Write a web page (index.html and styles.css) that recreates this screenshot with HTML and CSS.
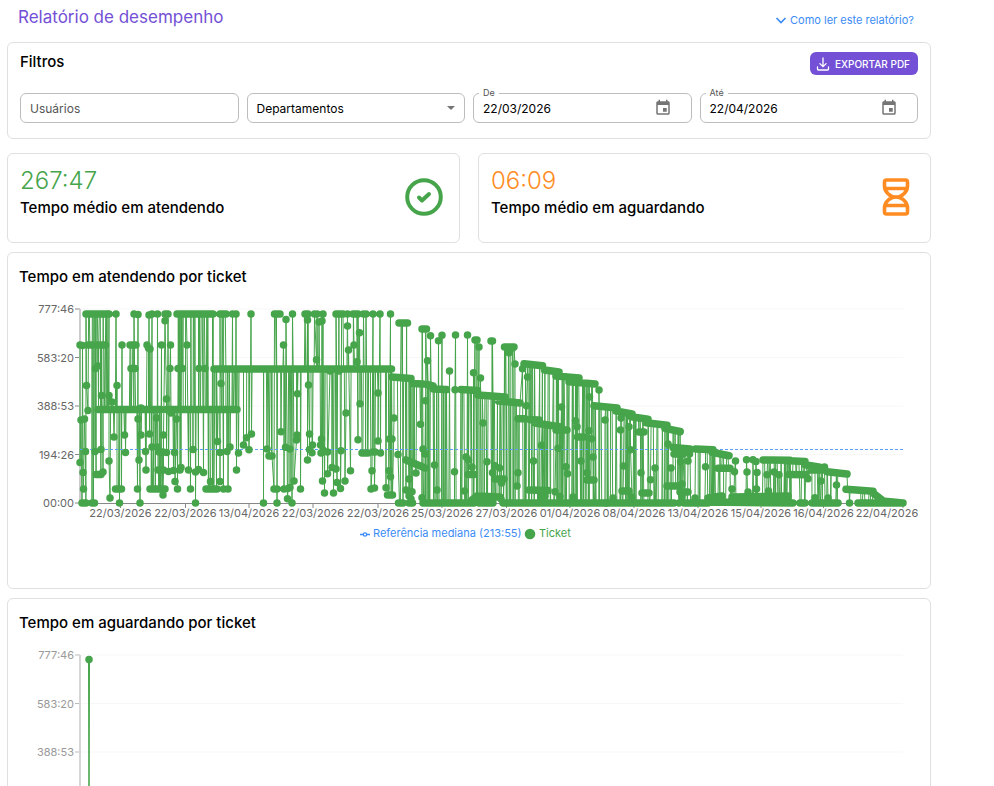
FILE: index.html
```html
<!DOCTYPE html>
<html lang="pt-BR">
<head>
<meta charset="utf-8">
<meta name="viewport" content="width=device-width, initial-scale=1">
<title>Relatório de desempenho</title>
<link rel="stylesheet" href="styles.css">
</head>
<body>
<main class="page">
  <header class="page-head">
    <h1 class="page-title">Relatório de desempenho</h1>
    <a class="help-link" href="#ajuda">
      <svg class="help-icon" viewBox="0 0 12 12" aria-hidden="true"><path d="M1.500 4 6 8.500 10.500 4" fill="none" stroke="currentColor" stroke-width="1.700"/></svg>
      Como ler este relatório?
    </a>
  </header>

  <section class="card filters">
    <div class="filters-head">
      <h2 class="card-title">Filtros</h2>
      <button class="export" type="button">
        <svg class="export-icon" viewBox="0 0 14 14" aria-hidden="true"><path d="M7 1v8.600M3.900 6.600 7 9.700l3.100-3.100M1.500 9.800v2.400q0 .8.8.8h9.400q.8 0 .8-.8V9.800" fill="none" stroke="currentColor" stroke-width="1.300" stroke-linecap="round"/></svg>
        EXPORTAR PDF
      </button>
    </div>
    <form class="fields">
      <div class="field">
        <input class="control" type="text" placeholder="Usuários" aria-label="Usuários">
      </div>
      <div class="field">
        <select class="control select" aria-label="Departamentos"><option>Departamentos</option></select>
        <svg class="caret" viewBox="0 0 8 4" aria-hidden="true"><path d="M0 0h8L4 4z" fill="#757575"/></svg>
      </div>
      <div class="field">
        <label class="field-label" for="de">De</label>
        <input class="control" id="de" type="text" value="22/03/2026">
        <button class="calendar" type="button" aria-label="Escolher data inicial"><svg viewBox="0 0 24 24" aria-hidden="true"><path d="M17 12h-5v5h5v-5zM16 1v2H8V1H6v2H5c-1.110 0-1.990.9-1.990 2L3 19c0 1.100.89 2 2 2h14c1.100 0 2-.9 2-2V5c0-1.100-.9-2-2-2h-1V1h-2zm3 18H5V8h14v11z" fill="#757575"/></svg></button>
      </div>
      <div class="field">
        <label class="field-label" for="ate">Até</label>
        <input class="control" id="ate" type="text" value="22/04/2026">
        <button class="calendar" type="button" aria-label="Escolher data final"><svg viewBox="0 0 24 24" aria-hidden="true"><path d="M17 12h-5v5h5v-5zM16 1v2H8V1H6v2H5c-1.110 0-1.990.9-1.990 2L3 19c0 1.100.89 2 2 2h14c1.100 0 2-.9 2-2V5c0-1.100-.9-2-2-2h-1V1h-2zm3 18H5V8h14v11z" fill="#757575"/></svg></button>
      </div>
    </form>
  </section>

  <section class="stats">
    <article class="card stat">
      <div>
        <p class="stat-value green">267:47</p>
        <h2 class="card-title">Tempo médio em atendendo</h2>
      </div>
      <svg class="stat-icon green" viewBox="0 0 38 38" aria-hidden="true"><circle cx="19" cy="19" r="16.800" fill="none" stroke="currentColor" stroke-width="4"/><path d="M14 19.500 17 22.500l7-6.500" fill="none" stroke="currentColor" stroke-width="4" stroke-linecap="round" stroke-linejoin="round"/></svg>
    </article>
    <article class="card stat">
      <div>
        <p class="stat-value orange">06:09</p>
        <h2 class="card-title">Tempo médio em aguardando</h2>
      </div>
      <svg class="stat-icon narrow orange" viewBox="0 0 28 38" aria-hidden="true"><g fill="none" stroke="currentColor" stroke-width="3.600" stroke-linejoin="round"><path d="M4.500 2h19q2 0 2 2v4C25.500 14 20 19 14 19S2.500 14 2.500 8V4q0-2 2-2zM4.500 36h19q2 0 2-2v-4C25.500 24 20 19 14 19S2.500 24 2.500 30v4q0 2 2 2zM3 10.500h22M3 27.500h22"/></g></svg>
    </article>
  </section>

  <section class="card chart-card">
    <h2 class="card-title">Tempo em atendendo por ticket</h2>
    <svg class="chart" id="chart-atendendo" viewBox="19 296 900 250" role="img" aria-label="Tempo em atendendo por ticket"></svg>
  </section>

  <section class="card chart-card">
    <h2 class="card-title">Tempo em aguardando por ticket</h2>
    <svg class="chart muted" id="chart-aguardando" viewBox="19 296 900 250" role="img" aria-label="Tempo em aguardando por ticket"></svg>
  </section>
</main>
<script src="charts.js"></script>
</body>
</html>
```
FILE: styles.css
```css
* { box-sizing: border-box; }

body {
  margin: 0;
  background: #fff;
  color: #000;
  font-family: Inter, "Liberation Sans", sans-serif;
  font-size: 12px;
}

h1, h2, p { margin: 0; }

button, input, select { font: inherit; color: inherit; }

.page {
  display: flex;
  flex-direction: column;
  margin: 0 63px 0 7px;
}

.page-head {
  display: flex;
  justify-content: space-between;
  align-items: center;
  height: 34px;
  margin-bottom: 8px;
  padding: 0 17px 0 11px;
}

.page-title {
  color: #7350d6;
  font-size: 17px;
  font-weight: 400;
  line-height: 24px;
}

.help-link {
  display: flex;
  align-items: center;
  gap: 3px;
  padding-top: 6px;
  color: #3b8cf5;
  font-size: 11px;
  line-height: 16px;
  text-decoration: none;
}

.help-icon { width: 12px; height: 12px; }

.card {
  border: 1px solid #e0e0e0;
  border-radius: 6px;
  background: #fff;
}

.card-title {
  font-size: 15px;
  font-weight: 500;
  line-height: 20px;
}

.filters { padding: 9px 12px 15px; }

.filters-head {
  display: flex;
  justify-content: space-between;
  align-items: flex-start;
  margin-bottom: 18px;
}

.export {
  display: flex;
  align-items: center;
  gap: 5px;
  height: 23px;
  padding: 0 8px 0 6px;
  border: 0;
  border-radius: 6px;
  background: #7350d6;
  color: #fff;
  font-size: 10px;
  font-weight: 500;
}

.export-icon { width: 14px; height: 14px; }

.fields {
  display: grid;
  grid-template-columns: repeat(4, 1fr);
  gap: 8px;
}

.field { position: relative; }

.control {
  display: block;
  width: 100%;
  height: 30px;
  padding: 0 9px;
  border: 1px solid #bdbdbd;
  border-radius: 6px;
  background: #fff;
  outline: 0;
}

.control::placeholder { color: #555; opacity: 1; }

.select { appearance: none; }

.caret {
  position: absolute;
  top: 13px;
  right: 10px;
  width: 8px;
  height: 4px;
  pointer-events: none;
}

.field-label {
  position: absolute;
  top: -6px;
  left: 6px;
  padding: 0 4px;
  background: #fff;
  color: #555;
  font-size: 9px;
  line-height: 12px;
}

.calendar {
  position: absolute;
  top: 6px;
  right: 20px;
  width: 18px;
  height: 18px;
  padding: 0;
  border: 0;
  background: none;
}

.calendar svg { display: block; width: 18px; height: 18px; }

.stats {
  display: grid;
  grid-template-columns: 1fr 1fr;
  gap: 18px;
  margin-top: 14px;
}

.stat {
  display: flex;
  justify-content: space-between;
  align-items: center;
  padding: 10px 16px 24px 12px;
}

.stat-value {
  font-size: 24px;
  font-weight: 300;
  line-height: 34px;
}

.stat-icon { width: 38px; height: 38px; margin-top: 12px; }
.stat-icon.narrow { width: 28px; margin-right: 4px; }

.green { color: #46a44b; }
.orange { color: #ff8c22; }

.chart-card {
  margin-top: 9px;
  padding: 14px 11px 42px;
}

.chart {
  display: block;
  width: 100%;
  height: auto;
  margin-top: 9px;
  overflow: visible;
}

.chart text { font-size: 11px; fill: #666; }
.chart .legend-median { fill: #3b8cf5; }
.chart .legend-ticket { fill: #46a44b; }
.chart.muted text { fill: #999; }

.grid { stroke: #f7f7f7; }
.axis { stroke: #888; }
.axis-y { stroke: #ccc; stroke-width: 2; }
.muted .axis { stroke: #bbb; }
.muted .axis-y { stroke: #d6d6d6; }
.median { stroke: #5c9ffa; stroke-dasharray: 3 2; }
.trace { fill: none; stroke: #46a44b; stroke-width: 1; }
.dots { fill: none; stroke: #46a44b; stroke-width: 7.5; stroke-linecap: round; }
```
FILE: charts.js
```js
const NS = "http://www.w3.org/2000/svg";
const LEFT = 80, RIGHT = 903, TOP = 309, BOTTOM = 503;

// Runs of neighbouring tickets: [x start, y start, x end, y end, sampling step]
const runs = [
  [86,314,107,314,2], [165,314,168,314,3], [177,314,213,314,2.5], [220,314,226,314,3],
  [274.5,314,280,314,3], [305,314,308,314,2], [336,314,343,314,3], [353,314,358,314,2],
  [88,345,92,345,2], [97.500,345,105.500,345,3], [130,345,136,345,3],
  [131,368.5,135,368.5,2], [178,368.5,182.5,368.5,2], [214,369,391.500,369,2.500],
  [98,409.5,161,409.5,1.700], [166,409.5,237,409.5,1.700],
  [159,452,163,452,2], [96,474.5,101,474.5,3], [158,470,163.5,470,3],
  [150,489,165,489,3], [206,489,217,489,3], [115.5,489,121.5,489,6],
  [82,503,86,503,4], [92,503,94.5,503,2], [269,456,272,456,1.500],
  [362,453,368,453,3], [387.5,495,392.5,495,2.5],
  [392,377,411,378.500,2.500], [413,383.500,423,384,3], [427,384.500,433,386,3],
  [433,389,446.5,389.5,4], [461,389.500,477.500,390.500,3], [478,395,505,397,3],
  [498.500,401,520,403,3], [399,323,407.500,323,4], [422,329,426.500,329,4],
  [504.500,347,514,347,3], [475,340,477,340,2], [491,341,492.500,341,1.500],
  [524,363.700,542.500,365.700,3], [544.500,370,559,372,3], [556,376,579,378,3],
  [569,381.700,595,384,3], [594,405.700,617,408,3], [616,411,632,414,3],
  [631,416.700,648,419.300,3], [646,422.700,667,425.300,3], [665,428.300,680,431.500,3],
  [518,418.700,525,418.700,3], [530,419.700,539,420,4], [535,423,561,427,3], [556,430,567,430,4],
  [577.500,437,584,437,3], [406,460,425,468,4], [468,474.500,474,474.500,3],
  [495,479,504,479,4], [587,480,594,480,4], [398.500,503,403,503,2], [409,503,412.500,503,2],
  [423,503,474,503,2.300], [472,500,477,496,2], [477,496,500,497,3], [479,503,493,503,3],
  [503,503,604,503,2.300], [529,490,548,490.500,4], [604,503,674,503,2.600],
  [639,432,644,432,3], [673,447.500,690,449,3], [674,454,683,454,4], [622,491,629,491,4],
  [642,493,649,493,4], [667,486,680,486,4], [680,492,688,492,4],
  [695.500,449,713,449.700,3], [712,452.300,729,455.700,3], [718,468.300,730,468.300,4],
  [684,503,708,503,3], [708,502,793,503,3], [708,498,722,496,4], [732,497,788,496,3.500],
  [763,460,768,460,3], [770,460,790,460.200,4], [784,460.500,805,461.500,3],
  [805,464.700,820,467.300,3], [811,470,825,470,4], [789,474.500,806,474.700,4],
  [827,471.700,847,474,4], [800,503,805,503,2], [812,503,838,503,4],
  [846,489.300,873,491.300,4], [858,503,865,503,4], [866,503,903,503,4], [882,501,903,503,4],
  [873,493,882,500,3]
];

// Single tickets: [x, y]
const points = [
  [109,314],[116,314],[134,314],[138,314.500],[149,315],[152,314],[157.500,314],[232.500,314],[236,314],
  [251,314],[292.500,314],[314.500,314],[317,314],[323,314],[347.500,314],[363.500,314],[366,314],[373,314],[380,314],[390.500,314],
  [165,320.700],[286,319.500],[307.500,320],[319,322],[322,321],[347.500,326],[359.500,332.700],
  [80,345],[82.500,345.500],[122,345],[147,345],[148.500,348],[150,349],[161.500,345],[170.500,345],[187,345],[283.500,345],[354,345],
  [316.500,359.700],[348.500,350],[357,361.700],[95.500,368.500],[98,366],[170,368.500],[199,368.500],[205,368.500],[330,371],[339,371],
  [86.500,385.500],[117,385.500],[221,383.500],[308.500,385],[297.500,393.700],[360,403.700],[378,393],[346,413],[394,418],
  [101.500,395.500],[109,395.500],[166.500,399],[112,402],[88,410.500],[81,420],[84.500,419],[138,419],[156.500,418],[171,413],[176.500,419],[141,408],
  [114,437],[124.500,435],[141,435],[149.500,434],[163.500,435],[95,451.500],[85.500,451.500],[101,449.500],[125.500,452.500],[145.500,451.500],
  [152,447],[157,447],[166.500,452.500],[174.500,452.500],[193,449.500],[217.500,441.500],[220,452.500],[227,451.500],[230,447],[238.500,453],
  [80,462.500],[109,461],[139,460],[83,472.500],[103,472],[146,470],[168.500,471.500],[173.500,470.500],[180,470],[181,467.500],[188.500,470],[195.500,472],[198.500,469.500],[203.500,472.500],[236.500,470],
  [83.500,489],[137.500,489],[163,495],[175,481.500],[177.500,489],[190.500,489],[210.500,481.500],[220,481.500],[223.500,489],[228,489],[110,498],
  [119.500,503],[140,503],[195.500,503],[281,431.700],[251.500,434],[246.500,437.700],[243.500,445],[249,449.700],[267,449],
  [285.500,447.300],[290,449],[297,435],[296.500,440],[309.500,434],[312.500,445],[309.500,449.500],[312,452.700],[307.500,460],
  [321.500,439],[320.500,445],[321,453],[323,450],[327.500,452],[341,450.700],[358,439.700],[373,452],[375,452],[378,441],[380.500,453],[389.500,439],[392,439],[398,454.500],
  [327.500,473.700],[332,467.500],[336,469],[337,482.500],[345,481],[350.500,470.700],[340.500,488.500],[333.500,493],[322.500,481],[324.500,493],
  [274,489],[277,489],[284,489],[288,488.500],[290,487.500],[294,481],[300.500,489],[287.500,498.700],[292,503],[263.500,503],[277,503],
  [371,489],[374.500,488],[372,470.700],[386,487.700],[389,470.700],[390.500,476.700],
  [430.500,335.700],[438.500,340.700],[442,335.300],[455.500,335],[467.500,335],[479,347],[509,352.700],[427.500,360.700],[449.500,371],[473.500,372.700],[480.500,378],[512.500,348],[515,364],[522.500,368.700],
  [455,389.700],[599,390],[425.500,400.700],[420.500,424.300],[527.500,377],[526.500,405.700],[561.500,407],[575.500,420.700],[577,426.700],[589.500,397],[589,430.700],[591.500,438.700],[541.500,445.300],[558,448.300],[483,423],
  [423,449],[425,454],[416,473],[409,479],[434.500,465],[454.500,471.700],[466,457],[468.500,460],[472,467],[487,461.700],[495,465.700],[499.500,468],[492.500,472.700],[501.500,483],
  [518,472.700],[517,486],[533.500,461],[566,466.700],[567.500,473.700],[581,461],[593,457],[587,472.700],[406,490],[412,491.700],[409,496],[411,499],[422,497.700],[437,490],[464.500,491],
  [501,499],[541,497],[545,496],[555,491.700],[560,496.500],[573,497],[613,498],[632,497],[605,420],[621,418],[620.500,430],[629,426.700],[630.500,449.700],[623.500,466],
  [641,472.700],[650.500,479.700],[655,468],[668,444],[671,468],[689.500,454],[680.500,461.700],[688,461],[682,484],[682,497],[679,503],
  [735.500,461],[734.500,471.700],[705.500,466.700],[732,489],[746.500,459.700],[753,459.700],[756,461.500],[747,472],[757,472.500],[767,474.700],[774,472],[779,474.700],
  [808,478.700],[824.500,467],[821,481],[836.500,485],[748,492],[756.500,489],[768.500,491],[695,498],[815,497.700],[828,498],[849.500,503],
  [606,503],[680,431.700]
];

const svgEl = (parent, name, attrs, text) => {
  const el = document.createElementNS(NS, name);
  for (const key in attrs) el.setAttribute(key, attrs[key]);
  if (text) el.textContent = text;
  parent.appendChild(el);
  return el;
};

function drawFrame(svg) {
  ["777:46", "583:20", "388:53", "194:26", "00:00"].forEach((label, i) => {
    const y = TOP + i * (BOTTOM - TOP) / 4;
    if (i < 4) svgEl(svg, "line", { class: "grid", x1: LEFT, x2: RIGHT, y1: y, y2: y });
    svgEl(svg, "line", { class: "axis", x1: LEFT - 5, x2: LEFT, y1: y, y2: y });
    svgEl(svg, "text", { x: LEFT - 6, y: y + 4, "text-anchor": "end" }, label);
  });
  svgEl(svg, "line", { class: "axis axis-y", x1: LEFT, x2: LEFT, y1: TOP, y2: BOTTOM });
  svgEl(svg, "line", { class: "axis", x1: LEFT, x2: RIGHT, y1: BOTTOM + .5, y2: BOTTOM + .5 });
  const dates = [
    [120.5, "22/03/2026"], [185.5, "22/03/2026"], [249, "13/04/2026"], [313, "22/03/2026"],
    [378, "22/03/2026"], [442, "25/03/2026"], [506.5, "27/03/2026"], [570, "01/04/2026"],
    [634, "08/04/2026"], [698, "13/04/2026"], [761, "15/04/2026"], [823.5, "16/04/2026"], [887, "22/04/2026"]
  ];
  dates.forEach(([x, label], i) => {
    const tick = i === dates.length - 1 ? RIGHT : x;
    svgEl(svg, "line", { class: "axis", x1: tick, x2: tick, y1: BOTTOM, y2: BOTTOM + 5 });
    svgEl(svg, "text", { x, y: 517, "text-anchor": "middle" }, label);
  });
}

function drawDots(svg, dots) {
  svgEl(svg, "path", { class: "dots", d: dots.map(([x, y]) => `M${x} ${y}h.01`).join("") });
}

// Tickets inside a run are unevenly spaced, so that the stems cluster
function sampleRun(run, seed) {
  const [x1, y1, x2, y2, step] = run;
  const n = Math.max(1, Math.round((x2 - x1) / (step * .75)));
  const samples = [];
  for (let i = 0; i <= n; i++) {
    const shift = Math.sin(i * 2.3 + seed * 1.7) * .55 + Math.sin(i * .61 + seed) * .9;
    const t = Math.min(1, Math.max(0, (i + shift) / n));
    samples.push([x1 + (x2 - x1) * t, y1 + (y2 - y1) * t, run]);
  }
  return samples;
}

// The line follows a run up to the neighbouring ticket before it leaves it
function tracePath(series) {
  const path = [];
  series.forEach((p, i) => {
    const prev = series[i - 1];
    if (prev && p[0] - prev[0] > .7) {
      if (prev[2] && prev[2][2] >= p[0]) path.push([p[0] - .6, prev[1]]);
      else if (p[2] && p[2][0] <= prev[0]) path.push([prev[0] + .6, p[1]]);
    }
    path.push(p);
  });
  return "M" + path.map(([x, y]) => x.toFixed(1) + " " + y.toFixed(1)).join("L");
}

const first = document.getElementById("chart-atendendo");
drawFrame(first);
const series = points.concat(...runs.map(sampleRun)).sort((a, b) => a[0] - b[0]);
svgEl(first, "path", { class: "trace", d: tracePath(series) });
svgEl(first, "line", { class: "median", x1: LEFT, x2: RIGHT, y1: 449.5, y2: 449.5 });
svgEl(first, "path", { class: "dots", d: runs.map(r => `M${r[0]} ${r[1]}L${r[2]} ${r[3]}`).join("") });
drawDots(first, points);
svgEl(first, "path", { d: "M360 534.500h3.500M366.500 534.500h3.500", stroke: "#3b8cf5", "stroke-width": 1.5 });
svgEl(first, "circle", { cx: 365, cy: 534.5, r: 1.7, fill: "none", stroke: "#3b8cf5", "stroke-width": 1.3 });
svgEl(first, "text", { class: "legend-median", x: 373, y: 537 }, "Referência mediana (213:55)");
svgEl(first, "circle", { cx: 530, cy: 534, r: 5.3, fill: "#46a44b" });
svgEl(first, "text", { class: "legend-ticket", x: 539, y: 537 }, "Ticket");

const second = document.getElementById("chart-aguardando");
drawFrame(second);
svgEl(second, "path", { class: "trace", d: "M88.500 313.500L89 503L89.500 313.500" });
drawDots(second, [[89, 313.5]]);
```
